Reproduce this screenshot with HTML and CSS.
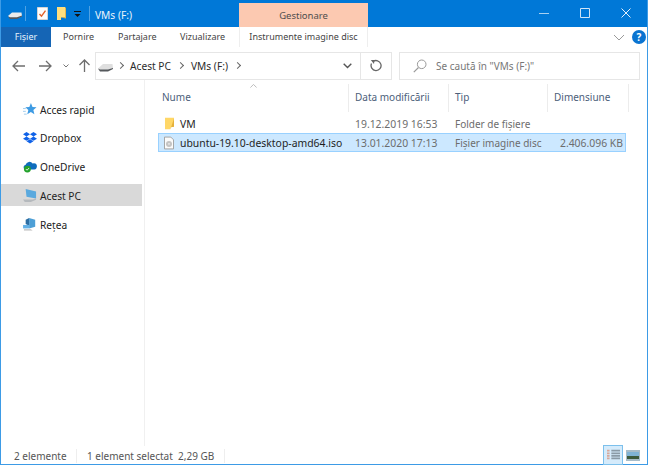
FILE: index.html
```html
<!DOCTYPE html>
<html lang="ro">
<head>
<meta charset="utf-8">
<title>VMs (F:)</title>
<link rel="stylesheet" href="styles.css">
</head>
<body>
<div class="window">
  <header class="titlebar">
    <div class="qat">
      <svg class="i-drive" width="14" height="7" viewBox="0 0 14 7"><path d="M0 4 4 .5h9.500L14 4 10 6H2Z" fill="#ececec"/><path d="M0 4.200 2 7h7l5-2.500V3.600L9 5.200H2Z" fill="#55585c"/></svg>
      <span class="qsep"></span>
      <svg class="i-check" width="11" height="13" viewBox="0 0 11 13"><path d="M.5.500h10v12H.5Z" fill="#fdfdfd" stroke="#d5d5d5"/><path d="m2.500 7 2 2.200 4-5.500" fill="none" stroke="#e2622a" stroke-width="1.400"/></svg>
      <svg class="i-fold" width="9" height="13" viewBox="0 0 9 13"><path d="M0 0h8v10l-4 .5V13H0Z" fill="#ffdf7e"/><path d="M4 10.500 8 10V0L9 1v10.500Z" fill="#e5b94e"/></svg>
      <svg class="i-down" width="7" height="7" viewBox="0 0 7 7"><path d="M0 .5h7" stroke="#111" fill="none"/><path d="M.5 3h6L3.500 6Z" fill="#111"/></svg>
      <span class="qsep"></span>
    </div>
    <div class="wintitle">VMs (F:)</div>
    <div class="ctx-head">Gestionare</div>
    <div class="caps">
      <svg width="10" height="10" viewBox="0 0 10 10"><path d="M0 5.500h10" stroke="#a9d0f0"/></svg>
      <svg width="10" height="10" viewBox="0 0 10 10"><path d="M.5.500h9v9h-9Z" fill="none" stroke="#cfe4f7"/></svg>
      <svg width="10" height="10" viewBox="0 0 10 10"><path d="m.5.500 9 9m0-9-9 9" stroke="#e3f0fb"/></svg>
    </div>
  </header>
  <nav class="tabs">
    <div class="tab tab-file">Fișier</div>
    <div class="tab t-pornire">Pornire</div>
    <div class="tab t-part">Partajare</div>
    <div class="tab t-viz">Vizualizare</div>
    <div class="tab tab-ctx">Instrumente imagine disc</div>
    <div class="tabs-right">
      <svg width="12" height="7" viewBox="0 0 12 7"><path d="m1 1 5 5 5-5" fill="none" stroke="#9a9a9a"/></svg>
      <span class="help">?</span>
    </div>
  </nav>
  <div class="toolbar">
    <svg class="nav-back" width="13" height="12" viewBox="0 0 13 12"><path d="M13 6H1M6 1 1 6l5 5" fill="none" stroke="#6e6e6e" stroke-width="1.300"/></svg>
    <svg class="nav-fwd" width="13" height="12" viewBox="0 0 13 12"><path d="M0 6h12M7 1l5 5-5 5" fill="none" stroke="#6e6e6e" stroke-width="1.300"/></svg>
    <svg class="nav-drop" width="6" height="4" viewBox="0 0 6 4"><path d="m.5.500 2.500 2.500L5.500.5" fill="none" stroke="#777"/></svg>
    <svg class="nav-up" width="11" height="13" viewBox="0 0 11 13"><path d="M5.500 13V1M.5 6l5-5 5 5" fill="none" stroke="#6e6e6e" stroke-width="1.300"/></svg>
    <div class="address">
      <svg class="addr-drive" width="15" height="9" viewBox="0 0 15 9"><path d="M0 5.500 5 1h9.500L15 5 10 8H2Z" fill="#dfdfdf"/><path d="M0 5.500 2 8.500h8L15 6V5L10 6.500H2Z" fill="#55585c"/></svg>
      <span class="crumb-arrow first"></span>
      <span class="crumb">Acest PC</span>
      <span class="crumb-arrow"></span>
      <span class="crumb">VMs (F:)</span>
      <span class="crumb-arrow"></span>
      <svg class="addr-drop" width="9" height="6" viewBox="0 0 9 6"><path d="m.7.700 3.800 3.800L8.300.7" fill="none" stroke="#555" stroke-width="1.400"/></svg>
    </div>
    <div class="refresh">
      <svg width="12" height="13" viewBox="0 0 12 13"><path d="M3 2.600a5 5 0 1 1-1.500 1.900" fill="none" stroke="#666" stroke-width="1.300"/><path d="M.8 1 4.500 1 4 5Z" fill="#666"/></svg>
    </div>
    <div class="search">
      <svg width="14" height="14" viewBox="0 0 14 14"><circle cx="8.700" cy="5.300" r="4.300" fill="none" stroke="#999"/><path d="M5.500 8.500 .8 13.200" stroke="#999" stroke-width="1.200"/></svg>
      <span>Se caută în "VMs (F:)"</span>
    </div>
  </div>
  <div class="main">
    <aside class="sidebar">
      <div class="nav-item">
        <svg width="14" height="14" viewBox="1 0 15 15"><path d="m9.500 1 1.700 4.300 4.300.3-3.400 2.900 1.100 4.500-3.800-2.400-3.800 2.400 1.100-4.500L3.500 5.600l4.300-.3Z" fill="#3e9be3"/><path d="M1 7h3M1 10h3M2 13h3" stroke="#9cc9ec"/></svg>
        <span>Acces rapid</span>
      </div>
      <div class="nav-item">
        <svg width="14" height="12" viewBox="0 0 16 13.500"><path d="m4 0 4 2.500L4 5 0 2.500Zm8 0 4 2.500L12 5 8 2.500ZM4 5l4 2.500L4 10 0 7.500Zm8 0 4 2.500L12 10 8 7.500ZM4 10.500l4-2.300 4 2.300L8 13Z" fill="#0f62e8"/></svg>
        <span>Dropbox</span>
      </div>
      <div class="nav-item">
        <svg width="14" height="13" viewBox="0 0 16 15"><path d="M2 11a3 3 0 0 1 1-5.500A4.500 4.500 0 0 1 11 4a3.500 3.500 0 0 1 5 3c0 2-1 4-3 4Z" fill="#0f6cbd"/><circle cx="5" cy="10.500" r="4" fill="#23a22c"/><path d="m3.300 10.500 1.300 1.300 2.300-2.500" fill="none" stroke="#fff"/></svg>
        <span>OneDrive</span>
      </div>
      <div class="nav-item active">
        <svg width="14" height="13" viewBox="0 0 16 15"><path d="M3 0 15 3v8L4 9Z" fill="#5aa9de"/><path d="M0 12h11l4-1v1.500L9 15H2Z" fill="#b5b9bd"/></svg>
        <span>Acest PC</span>
      </div>
      <div class="nav-item">
        <svg width="14" height="13" viewBox="0 0 16 15"><path d="m7 0 7 2v8l-7 2Z" fill="#4d9fd6"/><path d="M7 0 3 2v5l4 2Z" fill="#2d6ea3"/><path d="M0 8h7v4H0Z" fill="#62b0e6"/><path d="M1 13h8l2 1.500H1Z" fill="#bbb"/></svg>
        <span>Rețea</span>
      </div>
    </aside>
    <section class="content">
      <svg class="sort" width="7" height="4" viewBox="0 0 9 5"><path d="M.5 4.500l4-4 4 4" fill="none" stroke="#aaa"/></svg>
      <div class="row head">
        <div class="c-name">Nume</div>
        <div class="c-date">Data modificării</div>
        <div class="c-type">Tip</div>
        <div class="c-size">Dimensiune</div>
      </div>
      <div class="row file">
        <div class="c-name">
          <svg width="9" height="13" viewBox="0 0 10 13"><path d="M0 0h10v10l-4 .6V13H0Z" fill="#ffd767"/><path d="M6 13V10.600L10 10V1Z" fill="#e5b13b"/></svg>
          <span class="fname">VM</span>
        </div>
        <div class="c-date">19.12.2019 16:53</div>
        <div class="c-type">Folder de fișiere</div>
        <div class="c-size"></div>
      </div>
      <div class="row file selected">
        <div class="c-name">
          <svg width="10" height="14" viewBox="0 0 11 14"><path d="M.5.500h7l3 3v10H.5Z" fill="#fbfbfb" stroke="#9c9c9c"/><circle cx="5.500" cy="8" r="3.300" fill="#c4c4c4"/><circle cx="5.500" cy="8" r=".9" fill="#f2f2f2"/></svg>
          <span class="fname">ubuntu-19.10-desktop-amd64.iso</span>
        </div>
        <div class="c-date">13.01.2020 17:13</div>
        <div class="c-type">Fișier imagine disc</div>
        <div class="c-size">2.406.096 KB</div>
      </div>
    </section>
  </div>
  <footer class="status">
    <span class="st-count">2 elemente</span>
    <span class="st-sel">1 element selectat&nbsp;&nbsp;2,29 GB</span>
    <div class="views">
      <div class="view on">
        <svg width="13" height="12" viewBox="0 0 15 13"><path d="M0 1.500h3M0 4.500h3M0 7.500h3M0 10.500h3" stroke="#d8a89a" stroke-width="2"/><path d="M5 1.500h10M5 4.500h10M5 7.500h10M5 10.500h10" stroke="#8a9aa6" stroke-width="2"/></svg>
      </div>
      <div class="view">
        <svg width="14" height="11" viewBox="0 0 14 11"><path d="M0 0h14v11H0Z" fill="#a8bcc8"/><path d="M1 2h12v4H1Z" fill="#7fb3d5"/><path d="M1 6h12v3H1Z" fill="#3c5a3c"/></svg>
      </div>
    </div>
  </footer>
</div>
</body>
</html>
```

FILE: styles.css
```css
* { box-sizing: border-box; }
html, body { margin: 0; padding: 0; background: #fff; }
body { width: 648px; height: 465px; overflow: hidden; font-family: "Noto Sans", "Open Sans", sans-serif; font-size: 10px; color: #1e1e1e; }
.window { width: 648px; height: 465px; display: flex; flex-direction: column; border-left: 1px solid #3d9be6; border-right: 1px solid #3d9be6; border-bottom: 1px solid #3d9be6; }

.titlebar { height: 27px; flex: none; background: #0078d7; display: flex; align-items: center; color: #e9f3fb; }
.qat { width: 94px; padding-left: 7px; display: flex; align-items: center; flex: none; }
.i-drive { margin-right: 3px; margin-top: 4px; }
.qsep { width: 1px; height: 15px; background: #4fa2e3; }
.i-check { margin-left: 11px; }
.i-fold { margin-left: 9px; }
.i-down { margin: 2px 0 0 8px; }
.qsep:last-child { margin-left: 8px; }
.wintitle { width: 144px; font-size: 10.2px; flex: none; padding-top: 2px; }
.ctx-head { width: 129px; height: 24px; margin-top: 3px; flex: none; background: #fcc9b1; color: #4d4d4d; font-size: 9.5px; text-align: center; line-height: 25px; }
.caps { flex: 1; display: flex; justify-content: flex-end; gap: 31px; padding-right: 16px; margin-top: -1px; }

.tabs { height: 20px; flex: none; display: flex; align-items: center; font-size: 9px; color: #444; background: #fff; }
.tab { height: 20px; line-height: 20px; flex: none; }
.tab-file { width: 50px; background: #1565b5; color: #e8f2fb; text-align: center; }
.t-pornire { margin-left: 12px; width: 55px; }
.t-part { width: 62px; }
.t-viz { width: 59px; }
.tab-ctx { width: 129px; text-align: center; border-left: 1px solid #eee; border-right: 1px solid #eee; white-space: nowrap; }
.tabs-right { flex: 1; display: flex; justify-content: flex-end; align-items: center; gap: 7px; padding-right: 1px; }
.help { width: 14px; height: 14px; border-radius: 50%; background: #0a74d1; color: #fff; font-weight: 700; font-size: 10px; line-height: 14px; text-align: center; }

.toolbar { height: 33px; flex: none; display: flex; align-items: center; padding-top: 4px; }
.nav-back { margin-left: 11px; }
.nav-fwd { margin-left: 14px; }
.nav-drop { margin-left: 11px; }
.nav-up { margin-left: 10px; }
.address { width: 266px; height: 28px; margin-left: 5px; border: 1px solid #e6e6e6; display: flex; align-items: center; padding-left: 2px; font-size: 10.2px; color: #2b2b2b; }
.addr-drive { margin-top: 4px; }
.crumb-arrow { width: 5px; height: 5px; border-top: 1.3px solid #666; border-right: 1.3px solid #666; transform: rotate(45deg); margin: 0 8px 0 7px; flex: none; }
.crumb-arrow.first { margin: 0 7px 0 5px; }
.crumb { white-space: nowrap; }
.addr-drop { margin-left: auto; margin-right: 8px; }
.refresh { width: 31px; height: 28px; border: 1px solid #e6e6e6; border-left: 0; display: flex; align-items: center; justify-content: center; }
.search { width: 241px; height: 28px; margin-left: 7px; border: 1px solid #e6e6e6; display: flex; align-items: center; gap: 9px; padding-left: 13px; color: #777; font-size: 10px; }

.main { flex: 1; display: flex; min-height: 0; }
.sidebar { width: 144px; flex: none; border-right: 1px solid #f0f0f0; padding-top: 18px; }
.nav-item { height: 22px; margin-bottom: 6.75px; display: flex; align-items: center; font-size: 10.2px; color: #222; padding-left: 22px; margin-right: 2px; }
.nav-item span { padding-top: 1px; }
.nav-item svg { margin-right: 3px; flex: none; }
.nav-item.active { background: #d9d9d9; }

.content { flex: 1; position: relative; padding-left: 13px; }
.sort { position: absolute; left: 105px; top: 4px; }
.row { display: flex; align-items: center; }
.row.head { width: 471px; height: 32px; color: #4c607a; padding-top: 3px; margin-bottom: 2px; }
.row.head > div { height: 28px; line-height: 27px; border-right: 1px solid #ececec; }
.c-name { width: 191px; display: flex; align-items: center; flex: none; padding-left: 4px; }
.c-date { width: 100px; flex: none; padding-left: 6px; }
.c-type { width: 99px; flex: none; padding-left: 6px; white-space: nowrap; font-size: 10px; }
.c-size { width: 78px; flex: none; text-align: right; padding-right: 2px; white-space: nowrap; }
.row.head .c-size { width: 81px; text-align: left; padding-left: 6px; }
.row.file { width: 468px; height: 19px; color: #6d6d6d; font-size: 10.4px; }
.row.file .c-name { color: #1e1e1e; padding-left: 7px; }
.row.file .c-name svg { margin-right: 6px; flex: none; }
.fname { white-space: nowrap; font-size: 10.4px; }
.row.selected { background: #cce8ff; border: 1px solid #99d1ff; }
.row.selected .c-name { width: 190px; padding-left: 5px; }
.row.selected .c-size { width: 77px; }

.status { height: 18px; flex: none; display: flex; align-items: center; color: #555; padding-left: 13px; padding-top: 1px; }
.st-count { width: 63px; border-right: 1px solid #eee; height: 14px; line-height: 14px; }
.st-sel { padding-left: 10px; width: 148px; border-right: 1px solid #eee; height: 14px; line-height: 14px; white-space: nowrap; }
.views { margin-left: auto; display: flex; align-items: center; height: 18px; padding-right: 4px; }
.view { width: 20px; height: 20px; display: flex; align-items: center; justify-content: center; }
.view.on { background: #d5ebfb; border: 1px solid #7cc0ec; margin-top: -2px; }
```
